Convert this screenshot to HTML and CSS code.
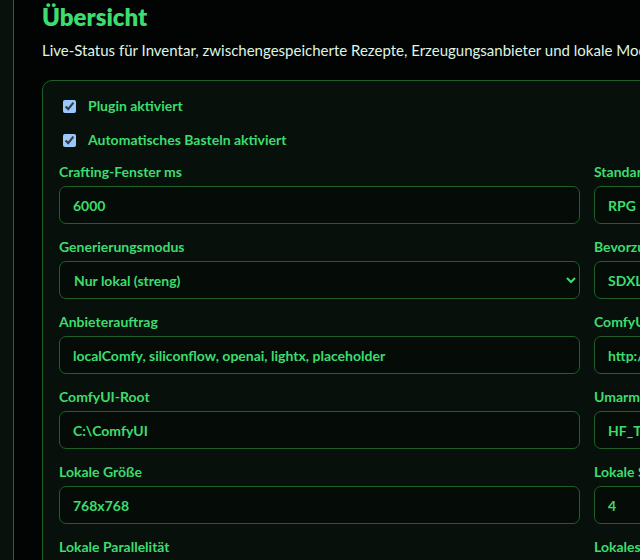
FILE: index.html
```html
<!DOCTYPE html>
<html lang="de">
<head>
    <meta charset="UTF-8">
    <meta name="viewport" content="width=device-width, initial-scale=1.0">
    <title>Übersicht</title>
    <link rel="stylesheet" href="styles.css">
</head>
<body>
    <div class="layout">
        <aside class="sidebar"></aside>

        <main class="main">
            <h1>Übersicht</h1>
            <p class="lead">Live-Status für Inventar, zwischengespeicherte Rezepte, Erzeugungsanbieter und lokale Modelle.</p>

            <!-- Settings card -->
            <div class="card">
                <label class="check">
                    <input type="checkbox" checked>
                    <span>Plugin aktiviert</span>
                </label>
                <label class="check">
                    <input type="checkbox" checked>
                    <span>Automatisches Basteln aktiviert</span>
                </label>

                <div class="form-grid">
                    <div class="form-group">
                        <label for="craftWindow">Crafting-Fenster ms</label>
                        <input type="text" id="craftWindow" value="6000">
                    </div>
                    <div class="form-group">
                        <label for="defaultStyle">Standardstil</label>
                        <input type="text" id="defaultStyle" value="RPG">
                    </div>

                    <div class="form-group">
                        <label for="genMode">Generierungsmodus</label>
                        <select id="genMode">
                            <option>Nur lokal (streng)</option>
                            <option>Lokal, dann Cloud</option>
                            <option>Nur Cloud</option>
                        </select>
                    </div>
                    <div class="form-group">
                        <label for="preferredModel">Bevorzugtes Modell</label>
                        <input type="text" id="preferredModel" value="SDXL">
                    </div>

                    <div class="form-group">
                        <label for="providerOrder">Anbieterauftrag</label>
                        <input type="text" id="providerOrder" value="localComfy, siliconflow, openai, lightx, placeholder">
                    </div>
                    <div class="form-group">
                        <label for="comfyUrl">ComfyUI-URL</label>
                        <input type="text" id="comfyUrl" value="http://127.0.0.1:8188">
                    </div>

                    <div class="form-group">
                        <label for="comfyRoot">ComfyUI-Root</label>
                        <input type="text" id="comfyRoot" value="C:\ComfyUI">
                    </div>
                    <div class="form-group">
                        <label for="hfToken">Umarmungsgesicht-Token</label>
                        <input type="text" id="hfToken" value="HF_TOKEN">
                    </div>

                    <div class="form-group">
                        <label for="localSize">Lokale Größe</label>
                        <input type="text" id="localSize" value="768x768">
                    </div>
                    <div class="form-group">
                        <label for="localSteps">Lokale Schritte</label>
                        <input type="text" id="localSteps" value="4">
                    </div>

                    <div class="form-group">
                        <label for="localParallel">Lokale Parallelität</label>
                        <input type="text" id="localParallel" value="1">
                    </div>
                    <div class="form-group">
                        <label for="localTimeout">Lokales Timeout ms</label>
                        <input type="text" id="localTimeout" value="120000">
                    </div>
                </div>
            </div>
        </main>
    </div>
</body>
</html>
```

FILE: styles.css
```css
* {
    margin: 0;
    padding: 0;
    box-sizing: border-box;
}

html, body {
    height: 100%;
    overflow: hidden;
}

body {
    font-family: Lato, "Noto Sans", sans-serif;
    background: #020403;
    color: #dff5e3;
}

.layout {
    display: flex;
    min-height: 100%;
}

.sidebar {
    flex: 0 0 14px;
    background: #08110b;
    border-right: 1px solid #1f6a2c;
}

.main {
    flex: 0 0 auto;
    padding: 3px 28px 40px 28px;
}

.main h1 {
    color: #3ddc6f;
    font-size: 24px;
    font-weight: 800;
    line-height: 28px;
}

.lead {
    margin-top: 9px;
    font-size: 15px;
    line-height: 20px;
    white-space: nowrap;
}

.card {
    width: 1090px;
    margin-top: 20px;
    padding: 15px 16px 20px;
    background: #07100a;
    border: 1px solid #1f5f29;
    border-radius: 10px;
}

.check {
    display: flex;
    align-items: center;
    gap: 12px;
    padding-left: 4px;
    margin-bottom: 14px;
    color: #3ddc6f;
    font-size: 14px;
    font-weight: 700;
    line-height: 20px;
}

.check input {
    width: 13px;
    height: 13px;
    margin: 0;
    color-scheme: dark;
}

.form-grid {
    display: grid;
    grid-template-columns: 1fr 1fr;
    column-gap: 14px;
    row-gap: 13px;
    margin-top: -2px;
}

.form-group label {
    display: block;
    margin-bottom: 4px;
    color: #3ddc6f;
    font-size: 14px;
    font-weight: 700;
    line-height: 20px;
}

.form-group input, .form-group select {
    width: 100%;
    height: 38px;
    padding: 0 13px;
    background: #050c07;
    border: 1px solid #1f5f29;
    border-radius: 7px;
    color: #3ddc6f;
    font-family: inherit;
    font-size: 14px;
    font-weight: 700;
    color-scheme: dark;
}

.form-group select {
    padding: 0 4px 0 10px;
}

.form-group input:focus, .form-group select:focus {
    outline: none;
    border-color: #3ddc6f;
}
```
